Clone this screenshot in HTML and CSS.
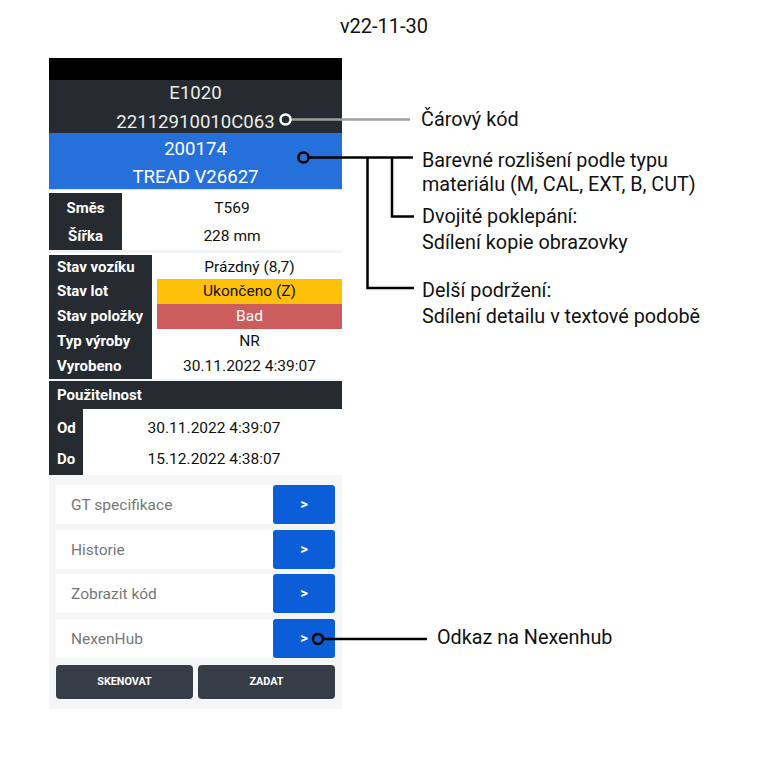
FILE: index.html
```html
<!DOCTYPE html>
<html lang="cs">
<head>
<meta charset="utf-8">
<title>Detail</title>
<link rel="stylesheet" href="styles.css">
</head>
<body>
<div class="page">
  <div class="version">v22-11-30</div>
  <div class="phone">
    <div class="statusbar"></div>
    <div class="hdr-dark">
      <div class="hl1">E1020</div>
      <div class="hl2">22112910010C063</div>
    </div>
    <div class="hdr-blue">
      <div class="hb">200174</div>
      <div class="hb">TREAD V26627</div>
    </div>
    <div class="blk-mix">
      <div class="mix-labels">
        <div class="mix-row">Směs</div>
        <div class="mix-row">Šířka</div>
      </div>
      <div class="mix-values">
        <div class="mix-row">T569</div>
        <div class="mix-row">228 mm</div>
      </div>
    </div>
    <div class="sep"></div>
    <div class="blk-state">
      <div class="st-labels">
        <div class="st-row">Stav vozíku</div>
        <div class="st-row">Stav lot</div>
        <div class="st-row">Stav položky</div>
        <div class="st-row">Typ výroby</div>
        <div class="st-row">Vyrobeno</div>
      </div>
      <div class="st-values">
        <div class="st-row">Prázdný (8,7)</div>
        <div class="st-row st-yellow">Ukončeno (Z)</div>
        <div class="st-row st-red">Bad</div>
        <div class="st-row">NR</div>
        <div class="st-row">30.11.2022 4:39:07</div>
      </div>
    </div>
    <div class="sep sep-thin"></div>
    <div class="use-head">Použitelnost</div>
    <div class="blk-use">
      <div class="use-labels">
        <div class="use-row">Od</div>
        <div class="use-row">Do</div>
      </div>
      <div class="use-values">
        <div class="use-row">30.11.2022 4:39:07</div>
        <div class="use-row">15.12.2022 4:38:07</div>
      </div>
    </div>
    <div class="actions">
      <div class="link-row"><span class="link-label">GT specifikace</span><span class="link-btn">&gt;</span></div>
      <div class="link-row"><span class="link-label">Historie</span><span class="link-btn">&gt;</span></div>
      <div class="link-row"><span class="link-label">Zobrazit kód</span><span class="link-btn">&gt;</span></div>
      <div class="link-row"><span class="link-label">NexenHub</span><span class="link-btn">&gt;</span></div>
      <div class="btn-row">
        <div class="dark-btn">SKENOVAT</div>
        <div class="dark-btn">ZADAT</div>
      </div>
    </div>
  </div>

  <svg class="callouts" width="768" height="768" viewBox="0 0 768 768" xmlns="http://www.w3.org/2000/svg">
    <path d="M291 119.5 H410" stroke="#9e9e9e" stroke-width="2.5" fill="none"/>
    <circle cx="285.5" cy="119.5" r="5" stroke="#ffffff" stroke-width="2.5" fill="none"/>
    <path d="M309 157.5 H413" stroke="#000" stroke-width="2.5" fill="none"/>
    <path d="M392 157.5 V216.5 H414" stroke="#000" stroke-width="2.5" fill="none"/>
    <path d="M367.5 157.5 V288 H414" stroke="#000" stroke-width="2.5" fill="none"/>
    <circle cx="303.5" cy="157.5" r="5" stroke="#000" stroke-width="2.5" fill="none"/>
    <path d="M323 639 H427" stroke="#000" stroke-width="2.5" fill="none"/>
    <circle cx="318" cy="639" r="5" stroke="#000" stroke-width="2.5" fill="none"/>
  </svg>

  <div class="note note-code">Čárový kód</div>
  <div class="note note-color">Barevné rozlišení podle typu<br>materiálu (M, CAL, EXT, B, CUT)</div>
  <div class="note note-dbl">Dvojité poklepání:<br>Sdílení kopie obrazovky</div>
  <div class="note note-long">Delší podržení:<br>Sdílení detailu v textové podobě</div>
  <div class="note note-hub">Odkaz na Nexenhub</div>
</div>
</body>
</html>
```

FILE: styles.css
```css
* { box-sizing: border-box; }
html, body { margin: 0; padding: 0; background: #ffffff; }
body { font-family: Roboto, "Liberation Sans", sans-serif; color: #111; }

.page { position: relative; width: 768px; height: 768px; overflow: hidden; }

.version {
  height: 58px;
  line-height: 52px;
  text-align: center;
  font-size: 20px;
  color: #111;
}

.phone {
  width: 293px;
  margin-left: 49px;
  background: #ffffff;
}

.statusbar { height: 22px; background: #000; }

.hdr-dark {
  height: 53px;
  background: #262a31;
  color: #ececec;
  text-align: center;
  font-size: 18.6px;
}
.hl1 { line-height: 26px; }
.hl2 { line-height: 22px; margin-top: 5px; }

.hdr-blue {
  height: 57px;
  background: #2670db;
  border-bottom: 1px solid #d6e4f7;
  color: #fff;
  text-align: center;
  font-size: 18.6px;
  padding-top: 2px;
}
.hb { line-height: 28px; }

.blk-mix { display: flex; margin-top: 3px; height: 57px; }
.mix-labels {
  width: 73px;
  background: #262a31;
  color: #fff;
  font-weight: 700;
  font-size: 15px;
  text-align: center;
  padding-top: 1px;
}
.mix-values {
  flex: 1;
  text-align: center;
  font-size: 15.5px;
  padding-top: 1px;
}
.mix-row { height: 28px; line-height: 28px; }

.sep { height: 3px; background: #f3f4f6; }
.sep-thin { height: 2px; }

.blk-state { display: flex; height: 125.5px; padding-top: 1.5px; }
.st-labels {
  width: 103px;
  background: #262a31;
  color: #fff;
  font-weight: 700;
  font-size: 15px;
  padding-left: 8px;
}
.st-values {
  flex: 1;
  margin-left: 5px;
  text-align: center;
  font-size: 15.5px;
}
.st-row { height: 24.8px; line-height: 24.8px; white-space: nowrap; }
.st-yellow { background: #ffc107; }
.st-red { background: #cd5c5c; color: #fff; }

.use-head {
  height: 28.5px;
  line-height: 28.5px;
  background: #262a31;
  color: #fff;
  font-weight: 700;
  font-size: 15px;
  padding-left: 8px;
}
.blk-use { display: flex; height: 66px; }
.use-labels {
  width: 34px;
  background: #262a31;
  color: #fff;
  font-weight: 700;
  font-size: 15px;
  padding-left: 8px;
  padding-top: 4px;
}
.use-values {
  flex: 1;
  text-align: center;
  font-size: 15.5px;
  padding-top: 4px;
  padding-left: 3px;
}
.use-row { height: 31px; line-height: 31px; }

.actions {
  background: #f5f6f8;
  padding: 10px 7px 10px 7px;
  display: flex;
  flex-direction: column;
  gap: 5.5px;
}
.link-row {
  display: flex;
  height: 39px;
  background: #ffffff;
}
.link-label {
  flex: 1;
  padding-left: 15px;
  line-height: 40px;
  font-size: 15.5px;
  color: #777;
}
.link-btn {
  width: 62px;
  background: #0b5ed7;
  border-radius: 3px;
  color: #fff;
  font-weight: 700;
  font-size: 15px;
  text-align: center;
  line-height: 39px;
}
.btn-row {
  display: flex;
  gap: 5px;
  margin-top: 1.5px;
}
.dark-btn {
  flex: 1;
  height: 34px;
  line-height: 34px;
  background: #373d47;
  border-radius: 4px;
  color: #fff;
  font-weight: 700;
  font-size: 10.8px;
  text-align: center;
}

.callouts { position: absolute; left: 0; top: 0; pointer-events: none; }

.note {
  position: absolute;
  left: 422px;
  font-size: 19.8px;
  color: #111;
  white-space: nowrap;
}
.note-code { left: 421px; top: 107px; line-height: 25px; }
.note-color { top: 149px; line-height: 24.3px; }
.note-dbl { top: 204px; line-height: 26px; }
.note-long { top: 278px; line-height: 26px; }
.note-hub { left: 437px; top: 625px; line-height: 25px; }
```
